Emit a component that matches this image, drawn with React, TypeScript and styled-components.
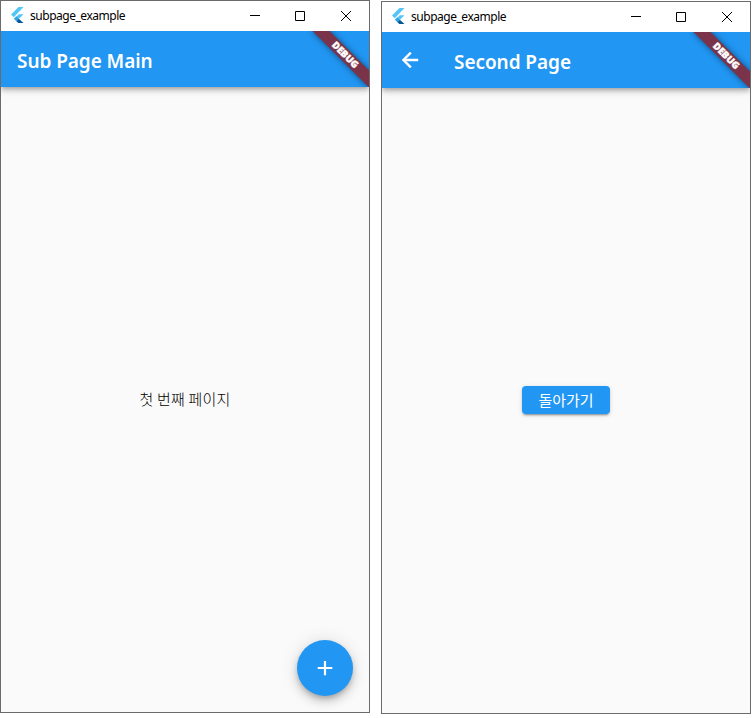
import React from "react";
import styled, { createGlobalStyle } from "styled-components";

const GlobalStyle = createGlobalStyle`
  body { margin: 0; background: #fff; overflow: hidden; }
  *, *::before, *::after { box-sizing: border-box; }
`;

const Desktop = styled.main`
  display: flex;
  align-items: flex-start;
  gap: 11px;
  width: 755px;
  height: 718px;
  font-family: "Noto Sans", "Noto Sans CJK KR", sans-serif;
`;

const Frame = styled.section<{ $top: number }>`
  display: flex;
  flex-direction: column;
  width: 370px;
  height: 713px;
  margin-top: ${(p) => p.$top}px;
  border: 1px solid #6b6b6b;
  background: #fafafa;
  overflow: hidden;
`;

const TitleBar = styled.header`
  display: flex;
  align-items: center;
  flex: none;
  height: 30px;
  padding-left: 8px;
  background: #fff;
`;

const LogoSvg = styled.svg`
  margin-bottom: 2px;
`;

const WindowTitle = styled.span`
  flex: 1;
  margin-left: 5px;
  font-size: 12px;
  line-height: 16px;
  letter-spacing: -0.47px;
  color: #000;
`;

const Controls = styled.div`
  display: flex;
  gap: 34px;
  padding-right: 17px;
  svg { display: block; }
`;

const AppBar = styled.div`
  position: relative;
  display: flex;
  align-items: center;
  flex: none;
  height: 56px;
  padding-left: 16px;
  background: #2196f3;
  box-shadow: 0 2px 4px -1px rgba(0, 0, 0, 0.2), 0 4px 5px rgba(0, 0, 0, 0.14),
    0 1px 10px rgba(0, 0, 0, 0.12);
  clip-path: inset(0 0 -16px 0);
`;

const PageTitle = styled.h1`
  margin: 0;
  padding-top: 3px;
  font-size: 19px;
  line-height: 24px;
  font-weight: 600;
  letter-spacing: -0.06px;
  color: #fff;
`;

const BackButton = styled.button`
  display: flex;
  width: 24px;
  height: 24px;
  margin-right: 32px;
  padding: 0;
  border: 0;
  background: none;
`;

const RibbonCorner = styled.div`
  position: absolute;
  top: 0;
  right: 0;
  width: 72px;
  height: 56px;
  overflow: hidden;
`;

const Ribbon = styled.div`
  position: absolute;
  top: 18px;
  right: -16px;
  width: 80px;
  height: 12px;
  transform: rotate(45deg);
  background: #7b3349;
  box-shadow: 0 0 6px rgba(0, 0, 0, 0.5);
  color: #fff;
  font-size: 9.6px;
  line-height: 12px;
  font-weight: 900;
  -webkit-text-stroke: 0.4px #fff;
  text-align: center;
`;

const Body = styled.div`
  position: relative;
  display: flex;
  align-items: center;
  justify-content: center;
  flex: 1;
`;

const Message = styled.p`
  margin: 0 0 1px;
  font-family: "Noto Sans CJK KR", sans-serif;
  font-size: 15px;
  line-height: 20px;
  font-weight: 300;
  letter-spacing: 0.2px;
  color: #000;
`;

const ReturnButton = styled.button`
  width: 88px;
  height: 28px;
  margin-bottom: 1px;
  padding: 0;
  border: 0;
  border-radius: 4px;
  background: #2196f3;
  color: #fff;
  font-family: "Noto Sans CJK KR", sans-serif;
  font-size: 15px;
  line-height: 26px;
  box-shadow: 0 3px 1px -2px rgba(0, 0, 0, 0.2), 0 2px 2px rgba(0, 0, 0, 0.14),
    0 1px 5px rgba(0, 0, 0, 0.12);
`;

const AddButton = styled.button`
  position: absolute;
  right: 16px;
  bottom: 16px;
  display: flex;
  align-items: center;
  justify-content: center;
  width: 56px;
  height: 56px;
  padding: 0;
  border: 0;
  border-radius: 50%;
  background: #2196f3;
  box-shadow: 0 3px 5px -1px rgba(0, 0, 0, 0.2), 0 6px 10px rgba(0, 0, 0, 0.14),
    0 1px 18px rgba(0, 0, 0, 0.12);
`;

const FlutterLogo = () => (
  <LogoSvg width="16" height="16" viewBox="0 0 16 16">
    <path d="M9.5 0H14.5L4.8 10.2L2 7.6Z" fill="#54c5f8" />
    <path d="M9.8 7.2H14.5L9.8 11.9L7.2 9.9Z" fill="#54c5f8" />
    <path d="M4.9 11.8L7.4 9.3L9.9 11.7L7.4 14.3Z" fill="#29a5e5" />
    <path d="M7.4 14.2L9.8 11.7L14.5 16H9.4Z" fill="#01579b" />
  </LogoSvg>
);

const WindowControls = () => (
  <Controls>
    <svg width="12" height="12" viewBox="0 0 12 12">
      <path d="M2 5.5H12" stroke="#000" />
    </svg>
    <svg width="12" height="12" viewBox="0 0 12 12">
      <path d="M1.5 1.5H10.5V10.5H1.5Z" fill="none" stroke="#000" />
    </svg>
    <svg width="12" height="12" viewBox="0 0 12 12">
      <path d="M1 1L11 11M11 1L1 11" stroke="#000" />
    </svg>
  </Controls>
);

interface AppWindowProps {
  top: number;
  title: string;
  back?: boolean;
  children: React.ReactNode;
}

const AppWindow = ({ top, title, back, children }: AppWindowProps) => (
  <Frame $top={top}>
    <TitleBar>
      <FlutterLogo />
      <WindowTitle>subpage_example</WindowTitle>
      <WindowControls />
    </TitleBar>
    <AppBar>
      {back && (
        <BackButton aria-label="Back">
          <svg width="24" height="24" viewBox="0 0 24 24" fill="#fff">
            <path
              d="M20 11H7.83l5.59-5.59L12 4l-8 8 8 8 1.41-1.41L7.83 13H20v-2z"
              stroke="#fff"
              strokeWidth="0.5"
            />
          </svg>
        </BackButton>
      )}
      <PageTitle>{title}</PageTitle>
      <RibbonCorner>
        <Ribbon>DEBUG</Ribbon>
      </RibbonCorner>
    </AppBar>
    <Body>{children}</Body>
  </Frame>
);

export default function App() {
  return (
    <>
      <GlobalStyle />
      <Desktop>
        <AppWindow top={0} title="Sub Page Main">
          <Message>첫 번째 페이지</Message>
          <AddButton aria-label="Add">
            <svg width="24" height="24" viewBox="0 0 24 24" fill="#fff">
              <path d="M19.3 13.1h-6.2v6.1h-2.2v-6.1H4.7v-2.2h6.2V4.9h2.2v6h6.2v2.2z" />
            </svg>
          </AddButton>
        </AppWindow>
        <AppWindow top={1} title="Second Page" back>
          <ReturnButton>돌아가기</ReturnButton>
        </AppWindow>
      </Desktop>
    </>
  );
}
